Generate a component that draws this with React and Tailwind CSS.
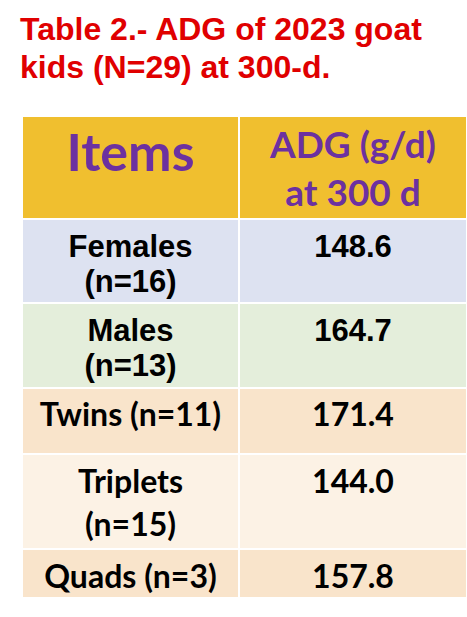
const rows = [
  { item: ['Females', '(n=16)'], adg: '148.6', bg: 'bg-[#dde2f1]', arial: true, h: 'h-[84px]', pt: 'pt-[9px]' },
  { item: ['Males', '(n=13)'], adg: '164.7', bg: 'bg-[#e4eedb]', arial: true, h: 'h-[85px]', pt: 'pt-[9px]' },
  { item: ['Twins (n=11)'], adg: '171.4', bg: 'bg-[#f9e4cb]', arial: false, h: 'h-[66px]', pt: 'pt-[3px]' },
  { item: ['Triplets', '(n=15)'], adg: '144.0', bg: 'bg-[#fcf2e5]', arial: false, h: 'h-[95px]', pt: 'pt-[4px]' },
  { item: ['Quads (n=3)'], adg: '157.8', bg: 'bg-[#f9e4cb]', arial: false, h: 'h-[49px]', pt: 'pt-[4px]' },
];

const arialCell = "font-['Liberation_Sans',Arial,sans-serif] text-[31px] leading-[35px]";
const calibriCell = "font-['Lato',sans-serif] text-[32px] leading-[43px]";

const App = () => {
  return (
    <div className="w-[467px] h-[617px] bg-white overflow-hidden">
      {/* Title */}
      <h1 className="pl-[20px] pt-[10px] text-[32px] leading-[38px] font-bold text-[#e00000] font-['Liberation_Sans',Arial,sans-serif]">
        Table 2.- ADG of 2023 goat
        <br />
        kids (N=29) at 300-d.
      </h1>

      {/* Table */}
      <table className="ml-[21px] mt-[29px] border-collapse w-[445px] table-fixed">
        <colgroup>
          <col className="w-[217px]" />
          <col className="w-[228px]" />
        </colgroup>
        <thead>
          <tr className="bg-[#f0bf2f] h-[103px] font-['Lato',sans-serif] font-bold text-[#6c31a0]">
            <th className="border-2 border-white text-[52px] leading-none align-top pt-[8px]">Items</th>
            <th className="border-2 border-white text-[37px] leading-[48px] align-top pt-[3px] font-bold">
              ADG (g/d)
              <br />
              at 300 d
            </th>
          </tr>
        </thead>
        <tbody>
          {rows.map(r => (
            <tr key={r.adg} className={`${r.bg} ${r.h}`}>
              <td
                className={`border-2 border-white text-center align-top font-bold text-black ${r.pt} ${
                  r.arial ? arialCell : calibriCell
                }`}
              >
                {r.item.map(line => (
                  <div key={line}>{line}</div>
                ))}
              </td>
              <td
                className={`border-2 border-white text-center align-top font-bold text-black ${r.pt} ${
                  r.arial ? arialCell : calibriCell
                }`}
              >
                {r.adg}
              </td>
            </tr>
          ))}
        </tbody>
      </table>
    </div>
  );
};

export default App;
